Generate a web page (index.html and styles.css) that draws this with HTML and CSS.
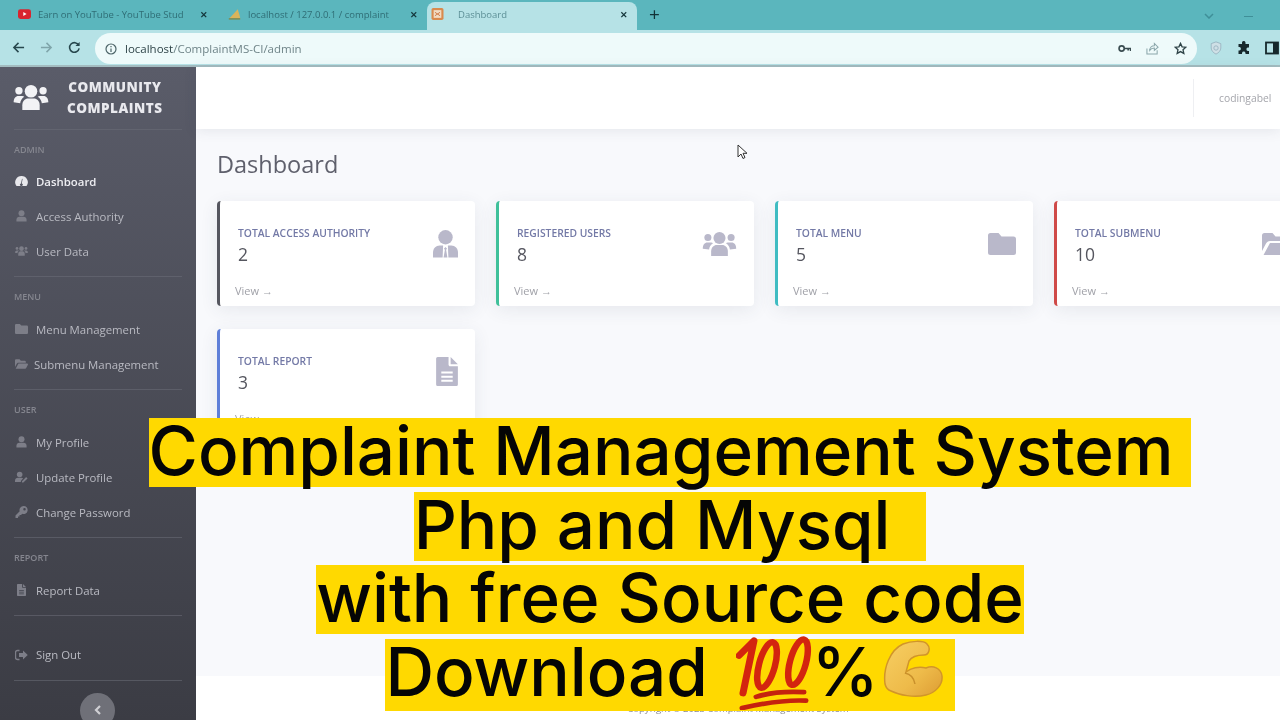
FILE: index.html
```html
<!DOCTYPE html>
<html>
	<head>
		<title>Dashboard</title>
		<link rel="stylesheet" href="styles.css">
	</head>
	<body>
		<svg class="defs" width="0" height="0">
			<defs>
				<linearGradient id="arm-shade" x1="0" y1="0" x2="1" y2="1">
					<stop offset="0" stop-color="#f7cf63"/>
					<stop offset=".6" stop-color="#eebb4a"/>
					<stop offset="1" stop-color="#dd9c34"/>
				</linearGradient>
			</defs>
			<symbol id="i-users" viewBox="0 0 36 28">
				<circle cx="18" cy="7.500" r="6.500"/><circle cx="5.500" cy="7" r="3.800"/><circle cx="30.500" cy="7" r="3.800"/>
				<path d="M9 27v-5c0-4.500 3-7 6-7h6c3 0 6 2.500 6 7v5z"/>
				<path d="M0 19c0-4 2-6.500 5-6.500h4c.8 0 1.500.2 2 .6-2.500 1.500-4 4.200-4.200 6.900z"/>
				<path d="M36 19c0-4-2-6.500-5-6.500h-4c-.8 0-1.500.2-2 .6 2.500 1.500 4 4.200 4.200 6.900z"/>
			</symbol>
			<symbol id="i-gauge" viewBox="0 0 24 20">
				<path fill-rule="evenodd" d="M12 1a11.500 11.500 0 0 0-10 17.500c.3.500.8.500 1.200.500h17.600c.4 0 .9 0 1.200-.500A11.500 11.500 0 0 0 12 1zm-1 13.500 2-8.500 1 .3-1.500 8.200a2.500 2.500 0 1 1-1.500 0z"/>
			</symbol>
			<symbol id="i-tie" viewBox="0 0 26 30">
				<circle cx="13" cy="8" r="7.500"/>
				<path d="M0 29v-5c0-4.500 3-7.500 7-7.500h3.500L10 29z"/>
				<path d="M26 29v-5c0-4.500-3-7.500-7-7.500h-3.500L16 29z"/>
				<path d="M13 18l-1.600 2 1 1-1.400 8h4l-1.400-8 1-1z"/>
			</symbol>
			<symbol id="i-user" viewBox="0 0 22 26">
				<circle cx="11" cy="7" r="6.500"/><path d="M0 25v-4c0-4 3-6.500 6.500-6.500h9c3.500 0 6.500 2.500 6.500 6.500v4z"/>
			</symbol>
			<symbol id="i-useredit" viewBox="0 0 28 24">
				<circle cx="10" cy="6.500" r="6"/><path d="M0 23v-3c0-4 3-6.500 6-6.500h8c1.500 0 2.500.4 3.500 1L13 20l-.5 3zM15 21l9-9 3 3-9 9h-3z"/>
			</symbol>
			<symbol id="i-key" viewBox="0 0 24 24">
				<path fill-rule="evenodd" d="M16 0a8 8 0 0 0-7.600 10.500L0 19v5h5v-3h3v-3h3l2.500-2.500A8 8 0 1 0 16 0zm2 4a2.500 2.500 0 1 1 0 5 2.500 2.500 0 0 1 0-5z"/>
			</symbol>
			<symbol id="i-folder" viewBox="0 0 28 22">
				<path d="M2.500 0h8l3 3.500h12A2.500 2.500 0 0 1 28 6v13.500a2.500 2.500 0 0 1-2.500 2.500h-23A2.500 2.500 0 0 1 0 19.500v-17A2.500 2.500 0 0 1 2.500 0z"/>
			</symbol>
			<symbol id="i-folderopen" viewBox="0 0 30 22">
				<path d="M0 2.500A2.500 2.500 0 0 1 2.500 0h8l3 3.500h9A2.500 2.500 0 0 1 25 6v2H8c-2 0-3 1-4 2.500L0 18z"/>
				<path d="M8 10h20c1.500 0 2.500 1.200 1.800 2.500l-4 8c-.5 1-1.300 1.500-2.300 1.500H1.500z"/>
			</symbol>
			<symbol id="i-file" viewBox="0 0 21 28">
				<path fill-rule="evenodd" d="M0 1.500A1.500 1.500 0 0 1 1.500 0H12v7.500c0 .8.700 1.500 1.500 1.500H21v17.500a1.500 1.500 0 0 1-1.500 1.500h-18A1.500 1.500 0 0 1 0 26.500zM5 14v2h11v-2zm0 4v2h11v-2zm0 4v2h11v-2zM14 0l7 7h-7z"/>
			</symbol>
			<symbol id="i-signout" viewBox="0 0 26 22">
				<path d="M9 2H5a4 4 0 0 0-4 4v10a4 4 0 0 0 4 4h4" fill="none" stroke="currentColor" stroke-width="2.800"/>
				<path d="M16 2l9.500 9-9.500 9v-5H8V7h8z"/>
			</symbol>
		</svg>

		<div class="tabbar">
			<div class="tab">
				<svg class="tab-icon" viewBox="0 0 16 12"><rect width="16" height="12" rx="3" fill="#d8242f"/><path d="M6.500 3.500v5l4-2.500z" fill="#fff"/></svg>
				<span class="tab-title">Earn on YouTube - YouTube Stud</span>
				<span class="tab-close">✕</span>
			</div>
			<div class="tab">
				<svg class="tab-icon" viewBox="0 0 16 14"><path d="M1 13 12 1c1 4 3 8 3 12z" fill="#d9b45a"/><path d="M1 13h14" stroke="#7a8f5a" stroke-width="2"/></svg>
				<span class="tab-title">localhost / 127.0.0.1 / complaint</span>
				<span class="tab-close">✕</span>
			</div>
			<div class="tab tab-active">
				<svg class="tab-icon" viewBox="0 0 14 14"><rect width="14" height="14" rx="2" fill="#d98a4e"/><rect x="2.500" y="2.500" width="9" height="9" fill="#f2dcc4"/><path d="M4 5l3 2 3-2M4 9l3-2 3 2" stroke="#c96a32" fill="none"/></svg>
				<span class="tab-title">Dashboard</span>
				<span class="tab-close">✕</span>
			</div>
			<span class="tab-new">+</span>
			<span class="window-ctrl">
				<svg width="10" height="6" viewBox="0 0 10 6"><path d="M1 1l4 4 4-4" fill="none" stroke="#3f8f98" stroke-width="1.500"/></svg>
				<span class="window-min"></span>
			</span>
		</div>

		<div class="toolbar">
			<svg class="nav-btn" viewBox="0 0 14 14"><path d="M13 7H2M7 2 2 7l5 5" fill="none" stroke="#27474d" stroke-width="1.600"/></svg>
			<svg class="nav-btn" viewBox="0 0 14 14"><path d="M1 7h11M7 2l5 5-5 5" fill="none" stroke="#7fa5aa" stroke-width="1.600"/></svg>
			<svg class="nav-btn" viewBox="0 0 14 14"><path d="M11.500 4.500A5.200 5.200 0 1 0 12 8" fill="none" stroke="#27474d" stroke-width="1.700"/><path d="M12.500 1v4.500H8z" fill="#27474d"/></svg>
			<div class="omnibox">
				<svg class="omni-info" viewBox="0 0 12 12"><circle cx="6" cy="6" r="5" fill="none" stroke="#4c6468" stroke-width="1.200"/><path d="M6 5.500V9M6 3v1.200" stroke="#4c6468" stroke-width="1.200"/></svg>
				<span class="omni-url"><b>localhost</b>/ComplaintMS-CI/admin</span>
				<svg class="omni-action" viewBox="0 0 16 10"><circle cx="4.500" cy="5" r="3.200" fill="none" stroke="#3a4c50" stroke-width="2"/><path d="M8 5h7.500v3M12.500 5v2.500" fill="none" stroke="#3a4c50" stroke-width="2"/></svg>
				<svg class="omni-action" viewBox="0 0 14 14"><path d="M1 7v6h11V9M4 9c0-3 2-5 5-5V1.500L13 5.500 9 9V6.500C7 6.500 5 7.500 4 9z" fill="none" stroke="#8aa6aa" stroke-width="1.100"/></svg>
				<svg class="omni-action" viewBox="0 0 14 14"><path d="m7 1.500 1.700 3.700 4 .4-3 2.700.9 4L7 10.300l-3.600 2 .9-4-3-2.700 4-.4z" fill="none" stroke="#2f4448" stroke-width="1.400"/></svg>
			</div>
			<svg class="ext-icon" viewBox="0 0 14 16"><path d="M7 1 1.500 3v5c0 3 2.500 5.500 5.500 7 3-1.500 5.500-4 5.500-7V3z" fill="#cfe0e6" stroke="#98b4c0"/><circle cx="7" cy="8" r="2.500" fill="none" stroke="#98b4c0"/></svg>
			<svg class="ext-icon" viewBox="0 0 14 14"><path d="M5 1.500a1.800 1.800 0 0 1 3.500 0V3H12v3.500h-1.200a1.800 1.800 0 0 0 0 3.500H12V13H8.500v-1a1.800 1.800 0 0 0-3.500 0v1H1.500V9.500h1a1.800 1.800 0 0 0 0-3.500h-1V3H5z" fill="#16282c"/></svg>
			<svg class="ext-icon" viewBox="0 0 14 14"><rect x="1" y="1.500" width="12" height="11" fill="none" stroke="#16282c" stroke-width="1.800"/><rect x="8" y="1.500" width="5" height="11" fill="#16282c"/></svg>
		</div>

		<div class="app">
			<div class="sidebar">
				<div class="brand">
					<svg class="brand-icon"><use href="#i-users"/></svg>
					<div class="brand-text">COMMUNITY<br>COMPLAINTS</div>
				</div>
				<hr class="side-line">
				<div class="side-head side-head-first">ADMIN</div>
				<a class="side-link active"><svg class="side-icon"><use href="#i-gauge"/></svg><span>Dashboard</span></a>
				<a class="side-link"><svg class="side-icon"><use href="#i-user"/></svg><span>Access Authority</span></a>
				<a class="side-link"><svg class="side-icon"><use href="#i-users"/></svg><span>User Data</span></a>
				<hr class="side-line">
				<div class="side-head">MENU</div>
				<a class="side-link"><svg class="side-icon"><use href="#i-folder"/></svg><span>Menu Management</span></a>
				<a class="side-link link-tight"><svg class="side-icon"><use href="#i-folderopen"/></svg><span>Submenu Management</span></a>
				<hr class="side-line">
				<div class="side-head">USER</div>
				<a class="side-link"><svg class="side-icon"><use href="#i-user"/></svg><span>My Profile</span></a>
				<a class="side-link"><svg class="side-icon"><use href="#i-useredit"/></svg><span>Update Profile</span></a>
				<a class="side-link"><svg class="side-icon"><use href="#i-key"/></svg><span>Change Password</span></a>
				<hr class="side-line">
				<div class="side-head">REPORT</div>
				<a class="side-link"><svg class="side-icon"><use href="#i-file"/></svg><span>Report Data</span></a>
				<hr class="side-line">
				<a class="side-link link-signout"><svg class="side-icon"><use href="#i-signout"/></svg><span>Sign Out</span></a>
				<hr class="side-line">
				<div class="side-toggle"><svg width="8" height="10" viewBox="0 0 8 10"><path d="M6 1 2 5l4 4" fill="none" stroke="#cfcfd3" stroke-width="2.200"/></svg></div>
			</div>

			<div class="main">
				<div class="topbar">
					<div class="topbar-user">codingabel</div>
				</div>
				<div class="content">
					<h1 class="page-title">Dashboard</h1>
					<div class="cards">
						<div class="card card-dark">
							<div class="card-body">
								<div>
									<div class="card-label">TOTAL ACCESS AUTHORITY</div>
									<div class="card-value">2</div>
								</div>
								<svg class="card-icon"><use href="#i-tie"/></svg>
							</div>
							<div class="card-view">View →</div>
						</div>
						<div class="card card-green">
							<div class="card-body">
								<div>
									<div class="card-label">REGISTERED USERS</div>
									<div class="card-value">8</div>
								</div>
								<svg class="card-icon icon-wide"><use href="#i-users"/></svg>
							</div>
							<div class="card-view">View →</div>
						</div>
						<div class="card card-teal">
							<div class="card-body">
								<div>
									<div class="card-label">TOTAL MENU</div>
									<div class="card-value">5</div>
								</div>
								<svg class="card-icon icon-folder"><use href="#i-folder"/></svg>
							</div>
							<div class="card-view">View →</div>
						</div>
						<div class="card card-red">
							<div class="card-body">
								<div>
									<div class="card-label">TOTAL SUBMENU</div>
									<div class="card-value">10</div>
								</div>
								<svg class="card-icon icon-open"><use href="#i-folderopen"/></svg>
							</div>
							<div class="card-view">View →</div>
						</div>
						<div class="card card-blue">
							<div class="card-body">
								<div>
									<div class="card-label">TOTAL REPORT</div>
									<div class="card-value">3</div>
								</div>
								<svg class="card-icon icon-file"><use href="#i-file"/></svg>
							</div>
							<div class="card-view">View →</div>
						</div>
					</div>
				</div>
				<div class="footer">Copyright © 2023 Complaint Management System</div>
			</div>
		</div>

		<svg class="cursor" width="12" height="16" viewBox="0 0 12 16"><path d="M1 1v12l3-3 2 4.500 2-1-2-4.200h4z" fill="#fff" stroke="#333" stroke-width="1"/></svg>

		<div class="caption">
			<div class="caption-line"><span>Complaint Management System </span></div>
			<div class="caption-line"><span>Php and Mysql  </span></div>
			<div class="caption-line"><span>with free Source code</span></div>
			<div class="caption-line caption-last"><span>Download <svg class="emoji-100" viewBox="0 0 76 80" preserveAspectRatio="none">
				<path d="M3 22 18 6 7 62" fill="none" stroke="#d3250f" stroke-width="7" stroke-linecap="round" stroke-linejoin="round"/>
				<ellipse cx="31" cy="32" rx="8" ry="25" transform="rotate(14 31 32)" fill="none" stroke="#d3250f" stroke-width="6.500"/>
				<ellipse cx="62" cy="29" rx="8" ry="25" transform="rotate(14 62 29)" fill="none" stroke="#d3250f" stroke-width="6.500"/>
				<path d="M20 66C35 61 50 60 68 61" fill="none" stroke="#c5220e" stroke-width="5" stroke-linecap="round"/>
				<path d="M6 78C30 72 50 69 70 70" fill="none" stroke="#c5220e" stroke-width="5" stroke-linecap="round"/>
			</svg>%<svg class="emoji-arm" viewBox="0 0 60 60">
				<path d="M2 44C0 28 7 10 20 4c8-3 20-4 24 0 4 4 2 11-3 11-6 0-12 1-15 6l-3 11c5-4 13-6 20-4 7-3 15 0 16 8 1 9-7 17-16 19-12 3-27 0-35-4-3-1-5-3-6-7z" fill="url(#arm-shade)" stroke="#d1952a" stroke-width="1.500"/>
				<path d="M22 33c5 1 9 5 10 11" fill="none" stroke="#c9902c" stroke-width="1.500"/>
			</svg></span></div>
		</div>
	</body>
</html>
```

FILE: styles.css
```css
body {
	margin: 0;
	width: 1280px;
	height: 720px;
	overflow: hidden;
	position: relative;
	font-family: "Open Sans", sans-serif;
	background: #fff;
}
.defs {
	position: absolute;
}

/* browser */
.tabbar {
	height: 30px;
	background: #5bb6bd;
	display: flex;
	align-items: flex-end;
	padding-left: 10px;
	box-sizing: border-box;
	filter: blur(.5px);
}
.tab {
	height: 28px;
	width: 207px;
	padding: 0 9px 4px 8px;
	box-sizing: border-box;
	display: flex;
	align-items: center;
	gap: 7px;
	font-size: 9.500px;
	color: #2f6d75;
}
.tab:first-child {
	width: 210px;
	padding-right: 12px;
}
.tab-active {
	width: 210px;
	background: #b6e2e6;
	border-radius: 8px 8px 0 0;
	padding-left: 4px;
	gap: 14px;
	color: #5c8f96;
}
.tab-icon {
	width: 13px;
	height: 12px;
	flex: none;
}
.tab-title {
	flex: 1;
	white-space: nowrap;
	overflow: hidden;
}
.tab-close {
	font-size: 9px;
	font-weight: bold;
	color: #14363b;
}
.tab-new {
	margin: 0 0 2px 12px;
	font-size: 19px;
	line-height: 28px;
	color: #123338;
}
.window-ctrl {
	margin-left: auto;
	margin-right: 27px;
	height: 28px;
	display: flex;
	align-items: center;
	gap: 30px;
}
.window-min {
	width: 9px;
	height: 1px;
	background: #3f8f98;
}
.toolbar {
	height: 37px;
	background: #b6e2e6;
	border-bottom: 2px solid #a3bcc0;
	box-sizing: border-box;
	display: flex;
	align-items: center;
	padding-left: 12px;
	overflow: hidden;
	filter: blur(.5px);
}
.nav-btn {
	flex: none;
	width: 13px;
	height: 13px;
	margin-right: 15px;
}
.omnibox {
	flex: none;
	margin-left: -1px;
	margin-top: 2px;
	width: 1102px;
	height: 31px;
	background: #eefafa;
	border-radius: 16px;
	display: flex;
	align-items: center;
	padding: 0 10px;
	box-sizing: border-box;
	margin-right: 12px;
}
.omni-info {
	width: 12px;
	height: 12px;
	margin-right: 8px;
}
.omni-url {
	font-size: 11.500px;
	color: #6f8488;
	flex: 1;
}
.omni-url b {
	font-weight: normal;
	color: #2f4448;
}
.omni-action {
	width: 13px;
	height: 13px;
	margin-left: 15px;
}
.ext-icon {
	width: 14px;
	height: 14px;
	margin-right: 14px;
	flex: none;
}

/* page */
.app {
	display: flex;
	height: 653px;
	filter: blur(.5px);
}
.sidebar {
	width: 196px;
	flex: none;
	background: linear-gradient(180deg, #5a5c69, #3b3c44);
	color: #b9bac2;
	overflow: hidden;
}
.brand {
	height: 62px;
	display: flex;
	align-items: center;
	padding-left: 13px;
	gap: 18px;
}
.brand-icon {
	width: 36px;
	height: 27px;
	fill: #f2f2f5;
	margin-bottom: 2px;
}
.brand-text {
	font-size: 13.500px;
	font-weight: 800;
	letter-spacing: .5px;
	line-height: 21px;
	color: #e9e9ee;
	text-align: center;
	font-family: "Open Sans", sans-serif;
}
.side-line {
	margin: 0 14px;
	height: 1px;
	border: 0;
	background: #6b6d79;
	opacity: .55;
}
.side-head {
	font-size: 9px;
	font-weight: 600;
	color: #85868f;
	height: 34.500px;
	line-height: 39px;
	padding-left: 14px;
	box-sizing: border-box;
}
.side-head-first {
	height: 33.500px;
}
.side-link {
	display: flex;
	align-items: center;
	height: 35px;
	padding-left: 15px;
	font-size: 11.400px;
	color: #b9bac2;
}
.side-link span {
	margin-left: 8px;
}
.side-link.active {
	color: #eeeef2;
	font-weight: 600;
}
.side-link.active .side-icon {
	fill: #e8e8ec;
}
.link-tight span {
	margin-left: 6px;
}
.side-icon {
	width: 13px;
	height: 12px;
	fill: #7d7e88;
	color: #7d7e88;
}
.side-link:has(+ .side-line) {
	margin-bottom: 7.500px;
}
.link-signout {
	margin-top: 21px;
}
.side-toggle {
	width: 35px;
	height: 35px;
	border-radius: 50%;
	margin: 12px 0 0 80px;
	background: #6f7078;
	display: flex;
	align-items: center;
	justify-content: center;
}
.main {
	flex: 1;
	min-width: 0;
	display: flex;
	flex-direction: column;
	background: #f8f9fc;
}
.topbar {
	height: 62px;
	flex: none;
	background: #fff;
	box-shadow: 0 2px 12px rgba(60, 65, 90, .1);
	display: flex;
	align-items: center;
	justify-content: flex-end;
	position: relative;
}
.topbar-user {
	width: 87px;
	height: 38px;
	line-height: 38px;
	box-sizing: border-box;
	padding-left: 25px;
	border-left: 1px solid #eeeff2;
	font-size: 10.300px;
	color: #a4a5ab;
	white-space: nowrap;
	overflow: hidden;
}
.content {
	flex: 1;
	padding: 20px 0 0 21px;
	overflow: hidden;
}
.page-title {
	margin: 0 0 22px;
	font-size: 23.500px;
	line-height: 30px;
	font-weight: 400;
	color: #5f606c;
}
.cards {
	display: grid;
	grid-template-columns: repeat(4, 258px);
	grid-auto-rows: 105px;
	column-gap: 21px;
	row-gap: 23px;
}
.card {
	background: #fff;
	border-radius: 4px;
	border-left: 3px solid;
	box-shadow: 0 4px 18px rgba(60, 65, 90, .09);
	box-sizing: border-box;
	padding: 25px 17px 0 15px;
}
.card-dark { border-left-color: #55565f; }
.card-green { border-left-color: #3fc09a; }
.card-teal { border-left-color: #3fbcc2; }
.card-red { border-left-color: #cf4a48; }
.card-blue { border-left-color: #5f7fd8; }
.card-body {
	display: flex;
	justify-content: space-between;
	align-items: flex-start;
	padding-left: 3px;
	height: 57px;
}
.card-label {
	font-size: 10.300px;
	font-weight: 600;
	line-height: 14px;
	color: #7379a6;
}
.card-value {
	font-size: 17.500px;
	font-weight: 500;
	line-height: 24px;
	margin-top: 2px;
	color: #55565f;
}
.card-icon {
	width: 25px;
	height: 30px;
	fill: #b9b8ca;
	color: #b9b8ca;
	margin-top: 3px;
}
.icon-wide {
	width: 35px;
	height: 26px;
	margin-top: 5px;
}
.icon-folder {
	width: 28px;
	height: 22px;
	margin-top: 7px;
}
.icon-open {
	width: 30px;
	height: 22px;
	margin: 7px 3px 0 0;
}
.icon-file {
	width: 22px;
	height: 29px;
	margin-top: 3px;
}
.card-view {
	font-size: 11px;
	line-height: 16px;
	color: #a0a1a8;
}
.footer {
	height: 44px;
	flex: none;
	background: #fff;
	text-align: center;
	font-size: 9.500px;
	line-height: 66px;
	color: #8a8b92;
}

.cursor {
	position: absolute;
	left: 737px;
	top: 144px;
}

/* caption over the video */
.caption {
	position: absolute;
	left: 0;
	top: 418px;
	width: 1340px;
	font-family: Inter, sans-serif;
	font-weight: 500;
	font-size: 67.300px;
	color: #050505;
}
.caption-line {
	height: 73.500px;
	display: flex;
	justify-content: center;
}
.caption-line span {
	height: 69px;
	line-height: 66px;
	background: #ffd900;
	white-space: pre;
}
.caption-last span {
	height: 72px;
	display: flex;
	align-items: flex-start;
}
.emoji-100 {
	width: 76px;
	height: 75px;
	flex: none;
	margin: -4px 0 0 10px;
}
.emoji-arm {
	width: 60px;
	height: 60px;
	flex: none;
	margin: 1px 12px 0 4px;
}
```
